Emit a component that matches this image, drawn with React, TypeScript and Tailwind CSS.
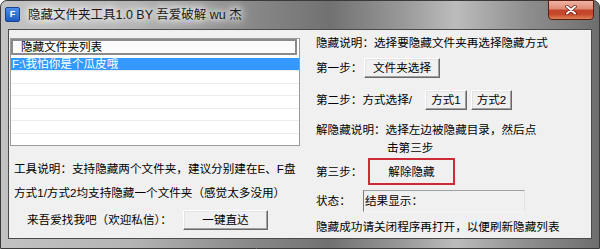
import React from "react";

const FONT = "font-['Liberation_Sans','Noto_Sans_CJK_SC',sans-serif]";

function Btn({ children, className = "" }: { children: React.ReactNode; className?: string }) {
  return (
    <div
      className={
        "flex items-center justify-center bg-[#f0f0f0] border border-t-white border-l-white border-r-[#696969] border-b-[#696969] shadow-[inset_-1px_-1px_0_#a0a0a0,inset_1px_1px_0_#e3e3e3] text-[11.6px] leading-none " +
        className
      }
    >
      {children}
    </div>
  );
}

function CloseX() {
  return (
    <svg width="12" height="10" viewBox="0 0 12 10">
      <path d="M2 1.5 L10 8.5 M10 1.5 L2 8.5" stroke="#5a1a10" strokeWidth="3.4" strokeLinecap="round" />
      <path d="M2 1.5 L10 8.5 M10 1.5 L2 8.5" stroke="#ffffff" strokeWidth="2" strokeLinecap="round" />
    </svg>
  );
}

export default function App() {
  const rows = [0, 1, 2, 3, 4, 5, 6];

  return (
    <div className={"w-[600px] h-[249px] overflow-hidden bg-white " + FONT}>
      <div className="w-[600px] h-[249px] flex flex-col rounded-t-[7px] border border-[#3a3a3a] bg-[linear-gradient(90deg,#c2c2c2_0%,#b4b4b4_22%,#8c8c8c_40%,#717171_55%,#9c9c9c_68%,#bcbcbc_76%,#8e8e8e_88%,#6e6e6e_100%)]">
        {/* title bar */}
        <div className="h-[28px] flex items-start relative">
          <div className="mt-[6px] ml-[4px] w-[15px] h-[15px] rounded-[2px] bg-[linear-gradient(180deg,#4d8ee8,#1c5bc4)] border border-[#16438f] flex items-center justify-center text-white text-[9px] font-bold leading-none">
            F
          </div>
          <div className="ml-[8px] mt-[6px] text-[12.5px] leading-[16px] text-[#1a1a1a] [text-shadow:0_0_6px_#ffffff,0_0_10px_#ffffff,0_0_14px_#ffffff]">
            隐藏文件夹工具1.0 BY 吾爱破解 wu 杰
          </div>
          <div className="ml-auto mr-[5px] -mt-[1px] w-[46px] h-[20px] rounded-b-[4px] border border-[#5b1e14] bg-[linear-gradient(180deg,#efb3a3_0%,#de8a72_45%,#c2432a_50%,#c54a2c_75%,#e08358_100%)] flex items-center justify-center">
            <CloseX />
          </div>
        </div>

        {/* client */}
        <div className="mx-[7px] h-[210px] border border-[#4a4a4a] bg-[#f0f0f0] flex text-black">
          {/* left column */}
          <div className="w-[292px] flex flex-col">
            <div className="mt-[8px] ml-[1px] w-[290px] h-[108px] border border-[#9a9a9a] bg-white flex flex-col">
              <div className="h-[16px] border-2 border-[#8a8a8a] bg-[#fbfbfb] mr-[2px] flex items-center pl-[8px] text-[11.6px] leading-none">
                隐藏文件夹列表
              </div>
              <div className="h-[2.5px]" />
              {rows.map((i) => (
                <div
                  key={i}
                  className={
                    i === 0
                      ? "h-[12.5px] bg-[#3399ff] text-white text-[11.6px] leading-none flex items-center pl-[1px]"
                      : "h-[12.5px] border-t border-[#ececec]"
                  }
                >
                  {i === 0 ? "F:\\我怕你是个瓜皮哦" : null}
                </div>
              ))}
            </div>
            <div className="mt-[13px] h-[20px] flex items-center pl-[5px] text-[11.6px] leading-none whitespace-nowrap">
              工具说明：支持隐藏两个文件夹，建议分别建在E、F盘
            </div>
            <div className="mt-[4px] h-[20px] flex items-center pl-[5px] text-[11.6px] leading-none whitespace-nowrap">
              方式1/方式2均支持隐藏一个文件夹（感觉太多没用）
            </div>
            <div className="mt-[7px] h-[20px] flex items-center pl-[18px] text-[11.6px] leading-none whitespace-nowrap">
              <span className="w-[156px]">来吾爱找我吧（欢迎私信）：</span>
              <Btn className="w-[85px] h-[20px]">一键直达</Btn>
            </div>
          </div>

          {/* right column */}
          <div className="flex-1 flex flex-col pl-[15px] text-[11.6px] leading-none whitespace-nowrap">
            <div className="mt-[3px] h-[20px] flex items-center">隐藏说明：选择要隐藏文件夹再选择隐藏方式</div>
            <div className="mt-[5px] h-[20px] flex items-center">
              <span className="w-[48px]">第一步：</span>
              <Btn className="w-[76px] h-[20px]">文件夹选择</Btn>
            </div>
            <div className="mt-[12px] h-[20px] flex items-center">
              <span className="w-[109px]">第二步：方式选择/</span>
              <Btn className="w-[42px] h-[20px]">方式1</Btn>
              <Btn className="ml-[4px] w-[41px] h-[20px]">方式2</Btn>
            </div>
            <div className="mt-[10px] h-[19px] flex items-center">解隐藏说明：选择左边被隐藏目录，然后点</div>
            <div className="h-[18px] flex items-center pl-[71px]">击第三步</div>
            <div className="mt-[1px] h-[27px] flex items-center">
              <span className="w-[52px]">第三步：</span>
              <div className="w-[87px] h-[27px] border-2 border-[#cc2a35] bg-[#f0f0f0] flex items-center justify-center">
                解除隐藏
              </div>
            </div>
            <div className="mt-[5px] h-[22px] flex items-center">
              <span className="w-[47px]">状态：</span>
              <div className="w-[162px] h-[22px] border border-t-[#a0a0a0] border-l-[#7a7a7a] border-r-[#e3e3e3] border-b-[#f5f5f5] bg-[#f0f0f0] flex items-center pl-[1px]">
                结果显示：
              </div>
            </div>
            <div className="mt-[5px] h-[20px] flex items-center">隐藏成功请关闭程序再打开，以便刷新隐藏列表</div>
          </div>
        </div>
      </div>
    </div>
  );
}
